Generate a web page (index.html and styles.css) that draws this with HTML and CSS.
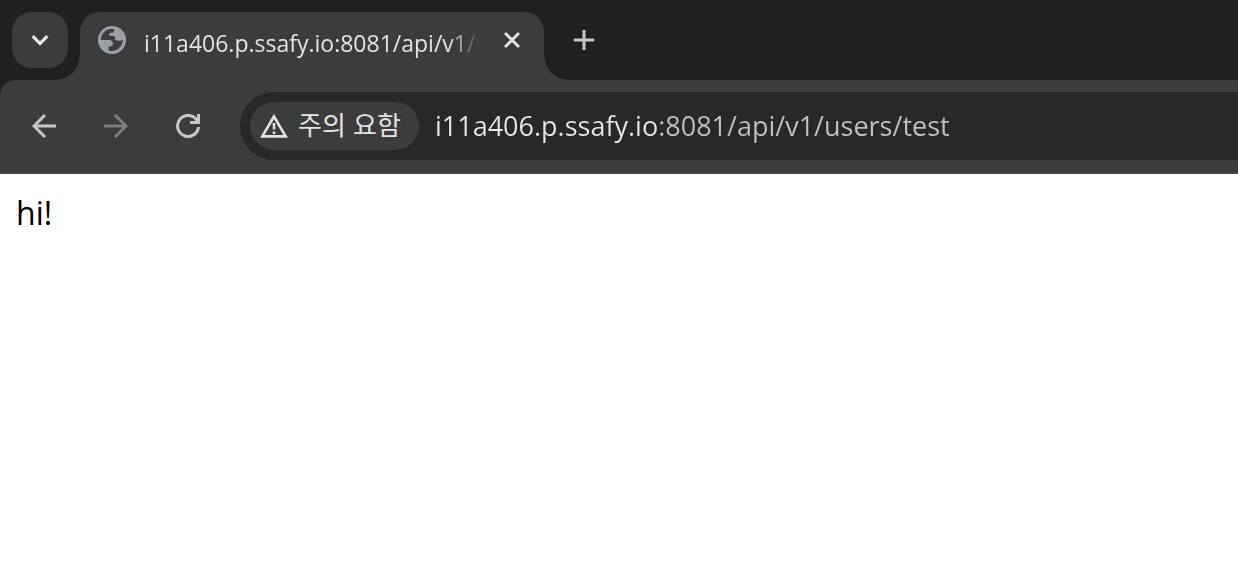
FILE: index.html
```html
<!DOCTYPE html>
<html lang="ko">
<head>
<meta charset="utf-8">
<title>i11a406.p.ssafy.io:8081/api/v1/users/test</title>
<link rel="stylesheet" href="styles.css">
</head>
<body>
<div class="browser">
  <header class="tab-strip">
    <button class="tab-search" aria-label="탭 검색">
      <svg width="20" height="20" viewBox="0 0 20 20" fill="none" stroke="#e8e8e8" stroke-width="3.2"><path d="M2.600 6.200 10 13.400l7.400-7.200"/></svg>
    </button>
    <div class="tab">
      <svg class="favicon" width="28" height="28" viewBox="0 0 28 28"><circle cx="14" cy="14" r="14" fill="#9aa0a6"/><path fill="#3c3c3c" d="M3 14C3 8 7.200 3.500 12.800 3H16v1.800c0 1.200-.8 1.900-1.800 1.900h-1.400c-1 0-1.600.6-1.600 1.500v1.600h3.300c1.600 0 2.600 1 2.600 2.400 0 1.600 1 2.500 2.400 2.500h2.300c1.200 0 2.200-.3 3-.9 0 6-4.800 11.200-10.800 11.200-1.200 0-2.400-.2-3.400-.6v-4h1.600c1.700 0 2.700-1 2.700-2.600 0-2.600-1.400-3.800-3.600-3.800z"/></svg>
      <span class="tab-title">i11a406.p.ssafy.io:8081/api/v1/users/test</span>
      <button class="tab-close" aria-label="닫기">
        <svg width="20" height="20" viewBox="0 0 20 20" stroke="#e3e3e3" stroke-width="3"><path d="m3 3 14 14M17 3 3 17"/></svg>
      </button>
    </div>
    <button class="new-tab" aria-label="새 탭">
      <svg width="20" height="20" viewBox="0 0 20 20" stroke="#c7c7c7" stroke-width="3"><path d="M10 0v20M0 10h20"/></svg>
    </button>
  </header>
  <nav class="toolbar">
    <button class="nav-button" aria-label="뒤로">
      <svg width="24" height="24" viewBox="0 0 24 24" fill="none" stroke="#c7c7c7" stroke-width="3"><path d="M24 12H2M13 1 2 12l11 11"/></svg>
    </button>
    <button class="nav-button" aria-label="앞으로" disabled>
      <svg width="24" height="24" viewBox="0 0 24 24" fill="none" stroke="#7d7d7d" stroke-width="3"><path d="M0 12h22M11 1l11 11-11 11"/></svg>
    </button>
    <button class="nav-button" aria-label="새로고침">
      <svg width="24" height="24" viewBox="0 0 24 24" fill="none" stroke="#c7c7c7" stroke-width="3"><path d="M22.500 13A10.500 10.500 0 1 1 20.200 5.300L22 8M22.500 0v8.500H14"/></svg>
    </button>
    <div class="address-bar">
      <button class="security">
        <svg width="28" height="24" viewBox="0 0 28 24" fill="none" stroke="#e3e3e3" stroke-width="2.600"><path d="M14 2.500 2.300 22.400h23.400z"/><path d="M14 9v6.500M14 17.500v2.600"/></svg>
        <span class="security-label">주의 요함</span>
      </button>
      <input class="address" type="text" aria-label="주소창" spellcheck="false" value="i11a406.p.ssafy.io:8081/api/v1/users/test">
    </div>
  </nav>
  <main class="page">hi!</main>
</div>
</body>
</html>
```
FILE: styles.css
```css
* { box-sizing: border-box; }
body {
  margin: 0;
  background: #fff;
  font-family: "Open Sans", "Noto Sans CJK KR", sans-serif;
}
button {
  display: flex;
  align-items: center;
  justify-content: center;
  padding: 0;
  border: 0;
  background: none;
  color: inherit;
  font: inherit;
  flex: none;
}
svg { display: block; flex: none; }
.browser { background: linear-gradient(#1f2120 100px, #fff 100px); }
.tab-strip {
  display: flex;
  height: 80px;
  padding: 12px 12px 0;
  background: #1f2120;
}
.tab-search {
  width: 56px;
  height: 56px;
  border-radius: 20px;
  background: #3c3c3c;
}
.tab {
  position: relative;
  display: flex;
  align-items: center;
  width: 464px;
  margin-left: 12px;
  padding: 0 18px 12px;
  border-radius: 20px 20px 0 0;
  background: #3c3c3c;
  color: #e3e3e3;
}
.tab::before,
.tab::after {
  content: "";
  position: absolute;
  bottom: 0;
  width: 24px;
  height: 24px;
}
.tab::before {
  right: 100%;
  background: radial-gradient(circle at 0 0, transparent 23px, #3c3c3c 24px);
}
.tab::after {
  left: 100%;
  background: radial-gradient(circle at 100% 0, transparent 23px, #3c3c3c 24px);
}
.tab-title {
  flex: 1;
  min-width: 0;
  margin: 6px 18px 0;
  overflow: hidden;
  font-size: 23px;
  line-height: 32px;
  white-space: nowrap;
  -webkit-mask-image: linear-gradient(to left, transparent, #000 32px);
  mask-image: linear-gradient(to left, transparent, #000 32px);
}
.tab-close { width: 28px; height: 28px; }
.new-tab { width: 56px; height: 56px; margin-left: 12px; }
.toolbar {
  display: flex;
  align-items: center;
  gap: 16px;
  height: 94px;
  padding: 12px 0 12px 16px;
  border-bottom: 2px solid #484848;
  border-radius: 16px 0 0 0;
  background: #3c3c3c;
}
.nav-button { width: 56px; height: 56px; }
.address-bar {
  display: flex;
  align-items: center;
  flex: 1;
  min-width: 0;
  height: 68px;
  margin-left: 8px;
  padding-left: 10px;
  border-radius: 34px 0 0 34px;
  background: #282828;
}
.security {
  gap: 10px;
  height: 48px;
  padding: 0 18px 0 10px;
  border-radius: 24px;
  background: #3c3c3c;
  color: #e3e3e3;
}
.security-label {
  padding-bottom: 4px;
  font-family: "Noto Sans CJK KR", sans-serif;
  font-size: 26px;
  font-weight: 400;
  line-height: 36px;
}
.address {
  flex: 1;
  min-width: 0;
  margin-left: 16px;
  padding: 0;
  border: 0;
  outline: 0;
  background: linear-gradient(to right, #e8e8e8 223px, #c0c0c0 223px);
  -webkit-background-clip: text;
  background-clip: text;
  color: transparent;
  caret-color: #e8e8e8;
  font: inherit;
  font-size: 27px;
  line-height: 40px;
}
.page {
  padding: 16px;
  color: #000;
  font-size: 32px;
  line-height: 46px;
}
```
